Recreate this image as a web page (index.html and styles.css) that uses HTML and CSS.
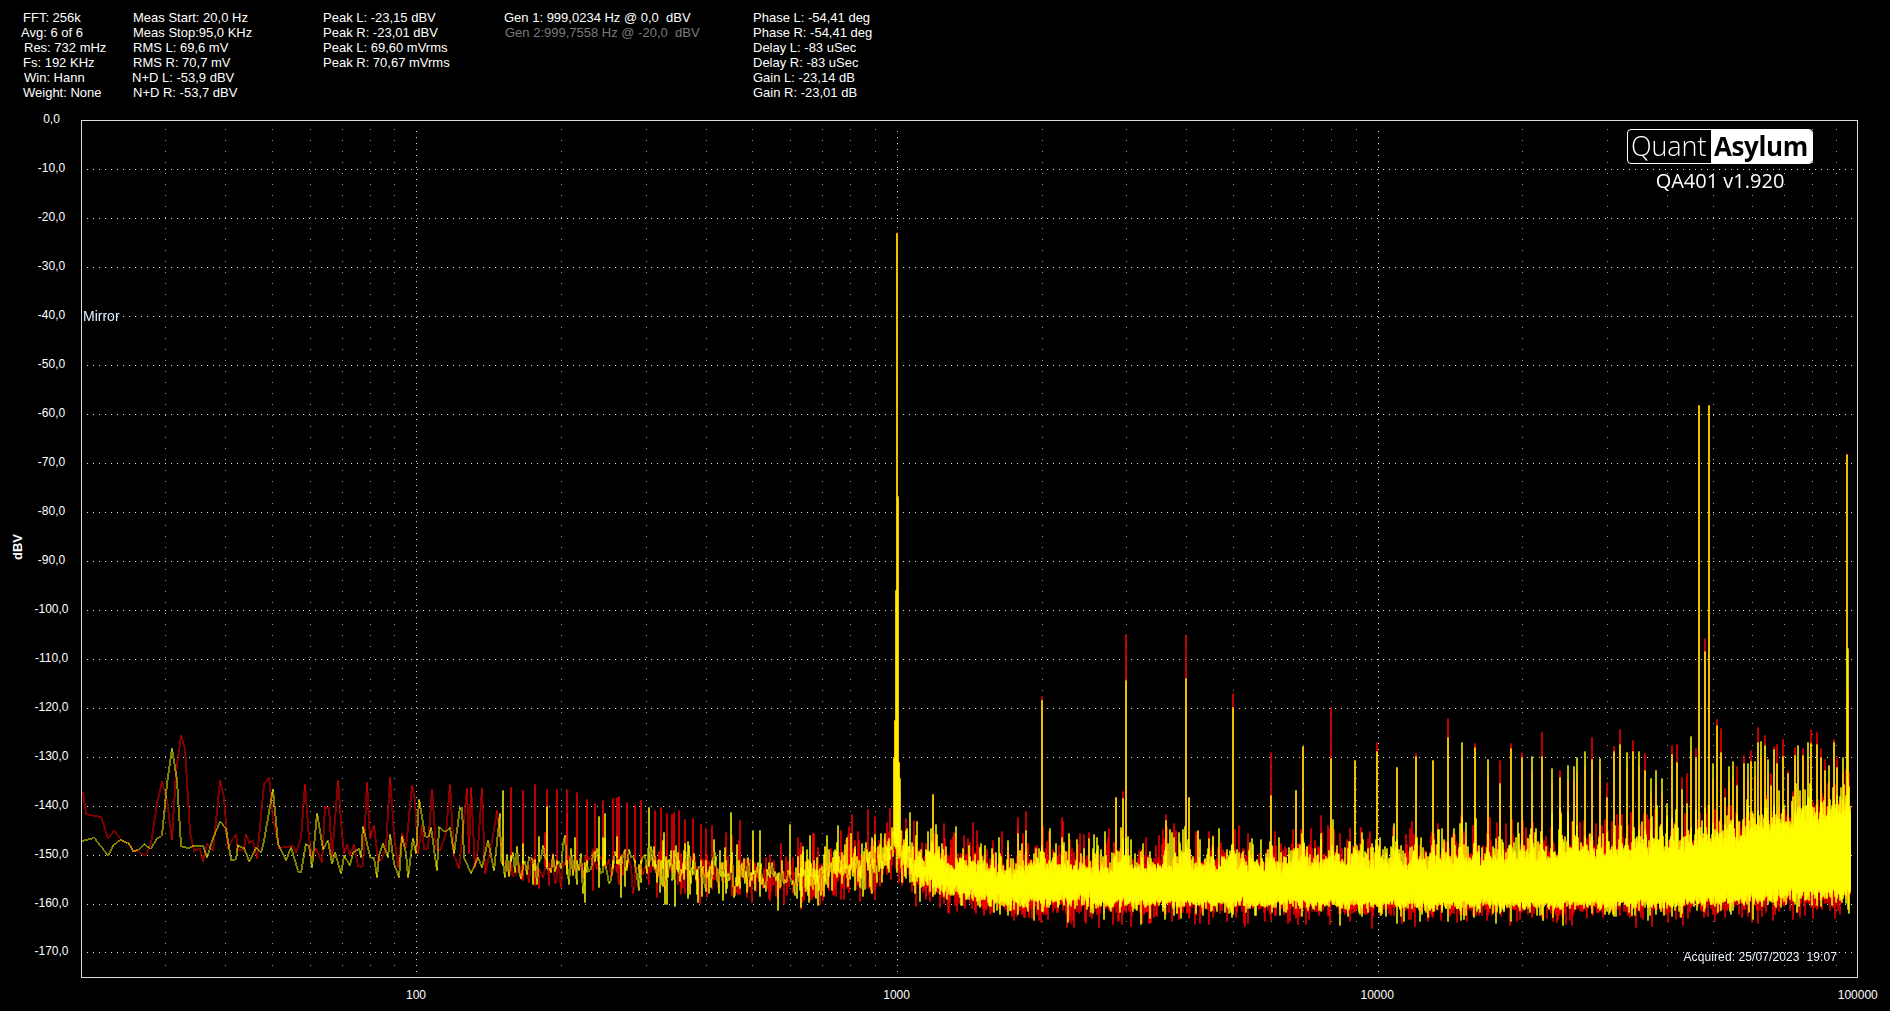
FILE: index.html
```html
<!DOCTYPE html>
<html lang="en">
<head>
<meta charset="utf-8">
<title>QA401 spectrum</title>
<link rel="stylesheet" href="styles.css">
</head>
<body>
<header class="readout">
  <div class="col col-fft">
    <div>FFT: 256k</div>
    <div class="nudge-l2">Avg: 6 of 6</div>
    <div class="nudge-r1">Res: 732 mHz</div>
    <div>Fs: 192 KHz</div>
    <div class="nudge-r1">Win: Hann</div>
    <div>Weight: None</div>
  </div>
  <div class="col col-meas">
    <div>Meas Start: 20,0 Hz</div>
    <div>Meas Stop:95,0 KHz</div>
    <div>RMS L: 69,6 mV</div>
    <div>RMS R: 70,7 mV</div>
    <div class="nudge-l1">N+D L: -53,9 dBV</div>
    <div>N+D R: -53,7 dBV</div>
  </div>
  <div class="col col-peak">
    <div>Peak L: -23,15 dBV</div>
    <div>Peak R: -23,01 dBV</div>
    <div>Peak L: 69,60 mVrms</div>
    <div>Peak R: 70,67 mVrms</div>
  </div>
  <div class="col col-gen">
    <div class="pre">Gen 1: 999,0234 Hz @ 0,0  dBV</div>
    <div class="pre off">Gen 2:999,7558 Hz @ -20,0  dBV</div>
  </div>
  <div class="col col-phase">
    <div>Phase L: -54,41 deg</div>
    <div>Phase R: -54,41 deg</div>
    <div>Delay L: -83 uSec</div>
    <div>Delay R: -83 uSec</div>
    <div>Gain L: -23,14 dB</div>
    <div>Gain R: -23,01 dB</div>
  </div>
</header>
<main class="chart">
  <div class="unit"><span>dBV</span></div>
  <div class="yaxis">
    <div>0,0</div><div>-10,0</div><div>-20,0</div><div>-30,0</div><div>-40,0</div><div>-50,0</div>
    <div>-60,0</div><div>-70,0</div><div>-80,0</div><div>-90,0</div><div>-100,0</div><div>-110,0</div>
    <div>-120,0</div><div>-130,0</div><div>-140,0</div><div>-150,0</div><div>-160,0</div><div>-170,0</div>
  </div>
  <div class="plot">
    <canvas id="spectrum" class="trace" width="1775" height="856"></canvas>
    <div class="brand">
      <div class="logo"><span class="logo-light">Quant</span><span class="logo-bold">Asylum</span></div>
      <div class="version">QA401 v1.920</div>
    </div>
    <div class="mirror">Mirror</div>
    <div class="acquired">Acquired: 25/07/2023  19:07</div>
  </div>
  <div class="xaxis">
    <div>100</div><div>1000</div><div>10000</div><div>100000</div>
  </div>
</main>
<script src="script.js"></script>
</body>
</html>
```
FILE: styles.css
```css
* { box-sizing: border-box; }
html, body { margin: 0; height: 100%; background: #000; }
body {
  width: 1890px;
  height: 1011px;
  overflow: hidden;
  color: #fff;
  font-family: "Liberation Sans", Arial, sans-serif;
  font-size: 12px;
}
.readout {
  display: flex;
  height: 94px;
  padding: 10px 0 0 23px;
  font-size: 13px;
  line-height: 15px;
  white-space: nowrap;
}
.col-fft { width: 110px; }
.col-meas { width: 190px; }
.col-peak { width: 181px; }
.col-gen { width: 249px; }
.pre { white-space: pre; }
.off { color: #7a7a7a; margin-left: 1px; }
.nudge-l2 { margin-left: -2px; }
.nudge-r1 { margin-left: 1px; }
.nudge-l1 { margin-left: -1px; }

.chart {
  display: grid;
  grid-template-columns: 22px 59px 1809px;
  grid-template-rows: 884px 33px;
}
.unit {
  grid-row: 1;
  display: flex;
  align-items: center;
  justify-content: center;
  padding-top: 22px;
}
.unit span {
  writing-mode: vertical-rl;
  transform: rotate(180deg);
  font-weight: bold;
  font-size: 13px;
  line-height: 13px;
  margin-left: 12px;
}
.yaxis { grid-row: 1; padding-top: 1px; text-align: center; }
.yaxis div { height: 48.97px; line-height: 48.97px; }
.plot {
  grid-row: 1;
  position: relative;
  margin-top: 26px;
  width: 1777px;
  height: 858px;
  border: 1px solid #dcdcdc;
}
.trace { display: block; }
.brand {
  position: absolute;
  top: 8px;
  right: 44px;
  display: flex;
  flex-direction: column;
  align-items: center;
  font-family: "Open Sans", sans-serif;
}
.logo {
  display: flex;
  width: 186px;
  height: 35px;
  border: 1px solid #fff;
  border-radius: 4px;
  overflow: hidden;
  background: #000;
  font-size: 27px;
  line-height: 32px;
}
.logo-light { width: 83px; padding-left: 3px; font-weight: 300; color: #fff; letter-spacing: -0.1px; }
.logo-bold { flex: 1; padding-left: 3px; background: #fff; color: #000; font-weight: 700; font-size: 26px; letter-spacing: -0.4px; }
.version { font-size: 20px; line-height: 28px; margin-top: 3px; color: #fff; }
.mirror { position: absolute; left: 1px; top: 187px; font-size: 14px; line-height: 16px; color: #dcefff; }
.acquired {
  position: absolute;
  right: 20px;
  top: 829px;
  line-height: 15px;
  letter-spacing: 0.1px;
  white-space: pre;
  color: #f0f6ff;
}
.xaxis {
  grid-column: 3;
  grid-row: 2;
  display: flex;
  gap: 416.6px;
  padding-left: 303px;
  line-height: 34px;
  white-space: nowrap;
}
.xaxis div { flex: 0 0 64px; text-align: center; }
```
FILE: script.js
```js
(function () {
  var canvas = document.getElementById('spectrum');
  var W = canvas.width, H = canvas.height, OX = 82, OY = 121;
  var ctx = canvas.getContext('2d');
  var img = ctx.createImageData(W, H);
  var d = img.data;
  for (var i = 0; i < d.length; i += 4) { d[i + 3] = 255; }

  function set(x, y, v) {
    x -= OX; y -= OY;
    if (x < 0 || y < 0 || x >= W || y >= H) return;
    var p = (y * W + x) * 4;
    d[p] = d[p + 1] = d[p + 2] = v;
  }
  function blend(x, y, c) {
    x -= OX; y -= OY;
    if (x < 0 || y < 0 || x >= W || y >= H) return;
    var p = (y * W + x) * 4;
    d[p] = d[p] * 0.5 + c[0] * 0.5;
    d[p + 1] = d[p + 1] * 0.5 + c[1] * 0.5;
    d[p + 2] = d[p + 2] * 0.5 + c[2] * 0.5;
  }
  function seg(x0, y0, x1, y1, c) {
    var dx = x1 - x0, dy = y1 - y0, n, k, t, a, b;
    if (Math.abs(dy) >= Math.abs(dx)) {
      n = Math.abs(dy);
      for (k = 0; k < n; k++) {
        t = k / n;
        a = Math.round(x0 + dx * t); b = y0 + (dy > 0 ? k : -k);
        blend(a, b, c); blend(a + 1, b, c);
      }
    } else {
      n = Math.abs(dx);
      for (k = 0; k < n; k++) {
        t = k / n;
        a = x0 + (dx > 0 ? k : -k); b = Math.round(y0 + dy * t);
        blend(a, b, c); blend(a, b + 1, c);
      }
    }
  }

  /* grid */
  var PX = 480.6, X0 = 80.4;
  function fx(f) { return Math.round(X0 + PX * Math.log10(f / 20)); }
  var y, x, dec, m;
  for (dec = 20; dec < 100000; dec *= 10) {
    for (m = 1; m < 10; m++) {
      var f = dec / 2 * m;
      if (f <= 20 || f >= 96000) continue;
      var major = (f === 100 || f === 1000 || f === 10000);
      if (major) continue;
      for (y = 129; y < 972; y += 11) set(fx(f), y, 150);
    }
  }
  [100, 1000, 10000].forEach(function (f) {
    for (y = 131; y < 975; y += 6) set(fx(f) , y, 225);
  });
  for (var k = 1; k <= 17; k++) {
    y = Math.round(120 + 48.97 * k);
    for (x = 87; x < 1853; x += 6) set(x, y, 225);
  }

  /* seeded random */
  function rng(seed) {
    return function () {
      seed |= 0; seed = seed + 0x6D2B79F5 | 0;
      var t = Math.imul(seed ^ seed >>> 15, 1 | seed);
      t = t + Math.imul(t ^ t >>> 7, 61 | t) ^ t;
      return ((t ^ t >>> 14) >>> 0) / 4294967296;
    };
  }
  function lerpTable(tb, x) {
    for (var i = 1; i < tb.length; i++) {
      if (x <= tb[i][0]) {
        var a = tb[i - 1], b = tb[i];
        return a[1] + (b[1] - a[1]) * (x - a[0]) / (b[0] - a[0]);
      }
    }
    return tb[tb.length - 1][1];
  }
  var TOP = [[500, 846], [600, 846], [700, 852], [800, 860], [880, 842], [893, 825], [900, 830], [915, 852], [960, 868], [1000, 870], [1450, 866], [1600, 862], [1700, 856], [1760, 842], [1849, 818]];
  var BOT = [[500, 878], [600, 884], [700, 888], [800, 892], [880, 880], [893, 860], [900, 870], [915, 885], [960, 895], [1000, 903], [1450, 905], [1600, 905], [1700, 903], [1760, 900], [1849, 895]];

  /* low frequency traces, read vertex by vertex */
  function lf(a) {
    var o = [];
    for (var i = 0; i < a.length; i += 2) o.push([Math.round(a[i] / 3), Math.round(700 + a[i + 1] / 3)]);
    return o;
  }
  var LF_R = lf([246,275,255,340,300,347,322,415,340,390,360,418,380,425,395,450,415,450,433,465,450,430,468,310,482,243,497,300,512,418,525,215,540,105,553,145,568,395,580,450,597,445,607,482,617,430,635,450,658,240,668,290,680,445,690,422,705,403,712,448,730,448,735,403,745,425,755,420,767,475,790,250,803,230,815,350,835,440,875,436,885,455,900,410,913,252,925,410,932,470,945,445,962,485,973,318,983,320,993,470,1010,240,1022,400,1030,458,1037,432,1048,465,1060,432,1072,495,1085,498,1097,245,1107,415,1120,375,1130,480,1140,480,1155,440,1168,232,1178,400,1192,500,1203,400,1215,440,1232,255,1243,300,1250,460,1262,375,1270,445,1282,445,1294,268,1305,440,1318,450,1335,400,1348,252,1360,465,1375,505,1397,265,1405,460,1411,262,1423,500,1432,440,1443,265,1452,520,1470,440,1488,330,1500,436]);
  var LF_Y = lf([246,420,280,410,322,465,340,432,360,417,380,425,395,450,415,448,433,430,450,445,468,415,482,405,497,250,512,143,527,240,540,435,565,440,580,435,605,435,617,470,635,415,658,362,675,385,690,478,705,478,712,433,730,440,745,482,765,440,780,455,790,420,815,268,830,430,855,480,870,440,890,510,900,516,915,430,925,435,932,500,947,338,965,448,982,420,994,490,1003,455,1021,518,1030,465,1047,495,1055,455,1075,445,1080,470,1085,378,1108,468,1120,470,1127,530,1135,465,1147,430,1160,470,1168,402,1178,490,1195,532,1203,408,1215,460,1222,532,1235,415,1245,460,1255,297,1272,405,1285,408,1290,380,1308,510,1315,378,1335,392,1348,380,1360,460,1378,320,1384,320,1390,470,1410,520,1430,470,1442,500,1462,420,1480,510,1497,340]);

  /* spurs: [page x, red top, yellow top] */
  var spurs = [];
  function addSpur(x, r, yy) { spurs.push([Math.round(x), Math.round(r), Math.round(yy)]); }
  /* mid band, red hum comb */
  [28,260,65,270,102,253,135,268,167,268,198,268,227,277,255,297,282,310,306,300,332,295,345,292,355,287,378,305,400,315,420,300,462,330,481,320,498,340,518,335,535,330,553,358,577,355,600,372,615,385,632,375,675,397,715,420,755,420,890,412,938,400,1020,390,1052,343,1100,328,1122,348,1328,370,1388,405,1415,367,1477,420].forEach(function (v, i, a) {
    if (i % 2 === 0) addSpur(500 + v / 3, 700 + a[i + 1] / 3, 860);
  });
  [5,270,135,318,310,340,440,322,690,335,755,390,868,372,1010,375,1248,362,1440,428].forEach(function (v, i, a) {
    if (i % 2 === 0) addSpur(500 + v / 3, 860, 700 + a[i + 1] / 3);
  });
  /* fundamental and its skirt */
  addSpur(893, 757, 757); addSpur(894, 720, 720); addSpur(895, 590, 590);
  addSpur(896, 232, 233); addSpur(897, 500, 496); addSpur(898, 762, 762); addSpur(899, 790, 778);
  addSpur(932, 794, 794);
  /* harmonics */
  [[123,228,240],[375,42,180],[555,45,174],[696,220,262],[810,396,525],[905,378,378],[990,262,413],[1061,420,420],[1128,366,393],[1188,441,441],[1244,400,407],[1296,420,420],[1340,295,350],[345,531,531],[885,510,510],[365,513,533],[520,610,650],[495,582,600],[52,590,640],[75,573,630],[182,590,650],[565,530,530],[960,585,640]].forEach(function (s) {
    addSpur(1000 + s[0] / 3, 620 + s[1] / 3, 620 + s[2] / 3);
  });
  /* upper band; -1 means no red tip */
  [[33,-1,366],[72,370,382],[110,-1,417],[147,420,490],[180,370,385],[212,397,410],[243,-1,408],[272,337,408],[302,-1,445],[327,450,470],[352,-1,435],[368,-1,437],[378,-1,412],[402,-1,393],[422,352,418],[446,-1,415],[467,485,530],[488,378,392],[507,327,372],[527,-1,396],[546,360,392],[564,-1,392],[582,400,450],[600,-1,475],[614,-1,450],[632,-1,475],[647,-1,550],[662,375,402],[677,372,425],[692,470,506],[708,460,550],[719,-1,348],[734,385,410],[761,55,92],[786,-1,430],[798,297,315],[810,323,395],[822,505,530],[834,-1,437],[846,-1,423],[857,437,495],[878,405,430],[890,-1,430],[900,390,424],[912,-1,422],[921,322,366],[930,-1,362],[941,345,375],[950,-1,418],[960,458,495],[968,378,388],[978,372,430],[996,357,407],[1012,450,460],[1032,380,405],[1040,-1,375],[1055,385,405],[1072,-1,365],[1080,327,370],[1097,336,372],[1110,385,410],[1122,417,450],[1133,-1,435],[1150,358,365],[1158,410,440],[1176,-1,412]].forEach(function (s) {
    var yy = 620 + s[2] / 3;
    addSpur(1450 + s[0] / 3, s[1] < 0 ? yy + 15 : 620 + s[1] / 3, yy);
  });
  addSpur(1698, 405, 405); addSpur(1708, 405, 405);
  addSpur(1846, 454, 454); addSpur(1847, 690, 648);

  function build(kind, seed) {
    var r = rng(seed);
    var red = kind === 'r';
    var v = (red ? LF_R : LF_Y).slice();
    var map = {}, bump = new Float32Array(2000);
    spurs.forEach(function (s) {
      var top = red ? s[1] : s[2];
      (map[s[0]] = map[s[0]] || []).push(top);
      if (s[0] < 900) return;
      var core = lerpTable(TOP, s[0]);
      var A = Math.min(36, Math.max(0, (core - top) * 0.42));
      for (var q = -12; q <= 12; q++) {
        var e = A * Math.exp(-Math.abs(q) / 3);
        if (e > bump[s[0] + q]) bump[s[0] + q] = e;
      }
    });
    function gauss() { return (r() + r() + r() + r() - 2) * 0.82; }
    function tail(mean, cap) { return Math.min(cap, -Math.log(1 - r()) * mean); }
    for (var x = 500; x <= 1849; x++) {
      var f = 20 * Math.pow(10, (x - X0) / PX);
      var raw = f * 2.3026 / (PX * 0.732);
      if (x < 650 && x % 2) continue;
      var n = x < 800 ? 1 : x < 900 ? 2 : x < 960 ? 3 + Math.round((x - 900) / 10) : Math.min(16, Math.round(raw * 0.7));
      var top = lerpTable(TOP, x) + (r() - 0.5) * 10;
      var bot = lerpTable(BOT, x) + (r() - 0.5) * 8;
      var dense = x >= 930;
      for (var i = 0; i < n; i++) {
        var t = dense ? r() * 1.02 - 0.01 : 0.5 + gauss() * 0.7;
        /* the spur skirt lifts only the upper half of the band */
        var yy = top + (bot - top) * t - (t < 0.6 ? bump[x] * (0.6 - t) / 0.6 * r() : 0);
        v.push([x, Math.round(yy)]);
      }
      var mid = Math.round((top + bot) / 2);
      var pUp = x < 800 ? 0.08 : x < 930 ? 0.2 : (red ? 0.75 : 0.7) + (x > 1450 ? 0.2 : 0);
      if (r() < pUp) {
        v.push([x, Math.round(top - bump[x] * 0.5 - tail(red ? 13 : 11, 36))]);
        v.push([x, mid]);
      }
      if (r() < pUp * 0.6 && x >= 930) {
        v.push([x, Math.round(top - tail(6, 20))]);
        v.push([x, mid]);
      }
      var pDown = x < 800 ? 0.08 : x < 930 ? 0.2 : (red ? 0.6 : 0.4);
      if (r() < pDown) {
        v.push([x, Math.round(bot + (red ? 3 : 0) + tail(red ? 6 : 5, 17))]);
        v.push([x, mid]);
      }
      var hits = map[x] || map[x - 1 * (x < 650 ? 1 : 0)];
      if (hits) {
        hits.forEach(function (tt) { v.push([x, tt]); v.push([x, mid]); });
      }
    }
    return v;
  }
  function draw(v, c) {
    for (var i = 1; i < v.length; i++) seg(v[i - 1][0], v[i - 1][1], v[i][0], v[i][1], c);
  }
  draw(build('r', 4711), [255, 0, 0]);
  draw(build('y', 1234), [255, 255, 0]);
  ctx.putImageData(img, 0, 0);
})();
```
